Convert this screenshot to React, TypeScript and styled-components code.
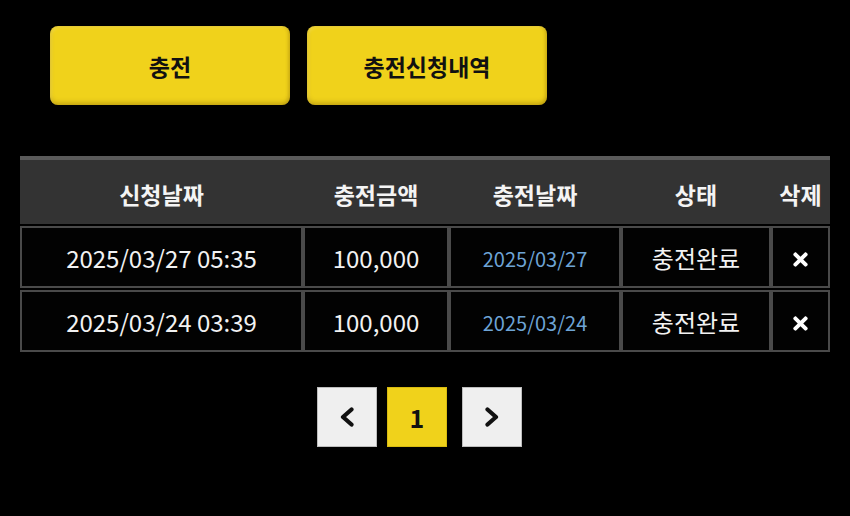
import { FC } from 'react';

import styled, { createGlobalStyle, css } from 'styled-components';
import { FaTimes } from 'react-icons/fa';

const GlobalStyle = createGlobalStyle`
  html, body {
    margin: 0;
    padding: 0;
    background-color: #000;
  }

  body {
    font-family: "Noto Sans CJK KR", "Noto Sans", sans-serif;
    color: #fff;
  }
`;

const Page = styled.main`
  display: flex;
  flex-flow: column nowrap;
  align-items: flex-start;

  min-height: 516px;
  padding: 26px 20px 0;
  box-sizing: border-box;
`;

const ButtonRow = styled.nav`
  display: flex;
  gap: 17px;

  margin-left: 30px;
`;

const YellowButton = styled.button`
  display: flex;
  align-items: center;
  justify-content: center;

  width: 240px;
  height: 79px;
  padding: 0;

  background-color: #f0d21b;
  border: none;
  border-radius: 8px;
  box-shadow:
    inset 0 -3px 4px rgba(120, 90, 0, 0.3),
    inset -2px 0 3px rgba(120, 90, 0, 0.18),
    inset 2px 2px 3px rgba(255, 255, 255, 0.15);

  font-family: inherit;
  font-size: 23px;
  font-weight: 700;
  color: #111;
  cursor: pointer;
`;

const COLUMNS = '283px 146px 172px 150px 59px';

const Table = styled.section`
  display: flex;
  flex-flow: column nowrap;
  gap: 2px;

  width: 810px;
  margin-top: 51px;
`;

const HeadRow = styled.div`
  display: grid;
  grid-template-columns: ${COLUMNS};

  height: 68px;
  box-sizing: border-box;

  background-color: #333;
  border-top: 4px solid #5a5a5a;
`;

const HeadCell = styled.div`
  display: flex;
  align-items: center;
  justify-content: center;

  padding-top: 4px;

  font-size: 23px;
  font-weight: 700;
  color: #f4f4f4;
  white-space: nowrap;
`;

const Row = styled.div`
  display: grid;
  grid-template-columns: ${COLUMNS};

  height: 62px;
`;

const Cell = styled.div<{ $tone?: 'date' | 'plain' }>`
  display: flex;
  align-items: center;
  justify-content: center;

  box-sizing: border-box;
  border: 2px solid #4a4a4a;
  background-color: #020202;

  font-size: 24px;
  color: #f2f2f2;

  ${({ $tone }) =>
    $tone === 'date' &&
    css`
      padding-top: 2px;
      font-size: 20px;
      color: #6ea4d6;
    `}
`;

const DeleteButton = styled.button`
  display: flex;
  align-items: center;
  justify-content: center;

  padding: 0;
  margin-top: 4px;

  background: none;
  border: none;
  color: #fff;
  cursor: pointer;
`;

const Pager = styled.div`
  display: flex;
  align-self: center;

  margin-top: 35px;
  margin-right: 11px;
`;

const PageButton = styled.button<{ $active?: boolean; $gap?: number }>`
  display: flex;
  align-items: center;
  justify-content: center;

  width: 60px;
  height: 60px;
  margin-left: ${({ $gap = 0 }) => $gap}px;
  padding: 0;

  background-color: ${({ $active }) => ($active ? '#f0d21b' : '#efefef')};
  border: 1px solid ${({ $active }) => ($active ? '#d8bb10' : '#bdbdbd')};

  font-family: inherit;
  font-size: 25px;
  font-weight: 700;
  color: #111;
  cursor: pointer;
`;

// Heavy chevron used for the previous / next page arrows
const Chevron: FC<{ dir: 'left' | 'right' }> = ({ dir }) => (
  <svg width="16" height="20" viewBox="0 0 16 20" aria-hidden="true">
    <polyline
      points={dir === 'left' ? '12.5,2.5 4,10 12.5,17.5' : '3.5,2.5 12,10 3.5,17.5'}
      fill="none"
      stroke="#111"
      strokeWidth="4.2"
      strokeLinecap="round"
      strokeLinejoin="round"
    />
  </svg>
);

interface IRecord {
  requestedAt: string;
  amount: string;
  chargedAt: string;
  status: string;
}

const records: IRecord[] = [
  { requestedAt: '2025/03/27 05:35', amount: '100,000', chargedAt: '2025/03/27', status: '충전완료' },
  { requestedAt: '2025/03/24 03:39', amount: '100,000', chargedAt: '2025/03/24', status: '충전완료' },
];

const headers = ['신청날짜', '충전금액', '충전날짜', '상태', '삭제'];

const App: FC = () => {
  return (
    <>
      <GlobalStyle />
      <Page>
        <ButtonRow>
          <YellowButton>충전</YellowButton>
          <YellowButton>충전신청내역</YellowButton>
        </ButtonRow>

        <Table>
          <HeadRow>
            {headers.map((label) => (
              <HeadCell key={label}>{label}</HeadCell>
            ))}
          </HeadRow>
          {records.map((record) => (
            <Row key={record.requestedAt}>
              <Cell>{record.requestedAt}</Cell>
              <Cell>{record.amount}</Cell>
              <Cell $tone="date">{record.chargedAt}</Cell>
              <Cell>{record.status}</Cell>
              <Cell>
                <DeleteButton aria-label="삭제">
                  <FaTimes size={21} />
                </DeleteButton>
              </Cell>
            </Row>
          ))}
        </Table>

        <Pager>
          <PageButton aria-label="이전">
            <Chevron dir="left" />
          </PageButton>
          <PageButton $active $gap={10}>1</PageButton>
          <PageButton $gap={15} aria-label="다음">
            <Chevron dir="right" />
          </PageButton>
        </Pager>
      </Page>
    </>
  );
};

export default App;
